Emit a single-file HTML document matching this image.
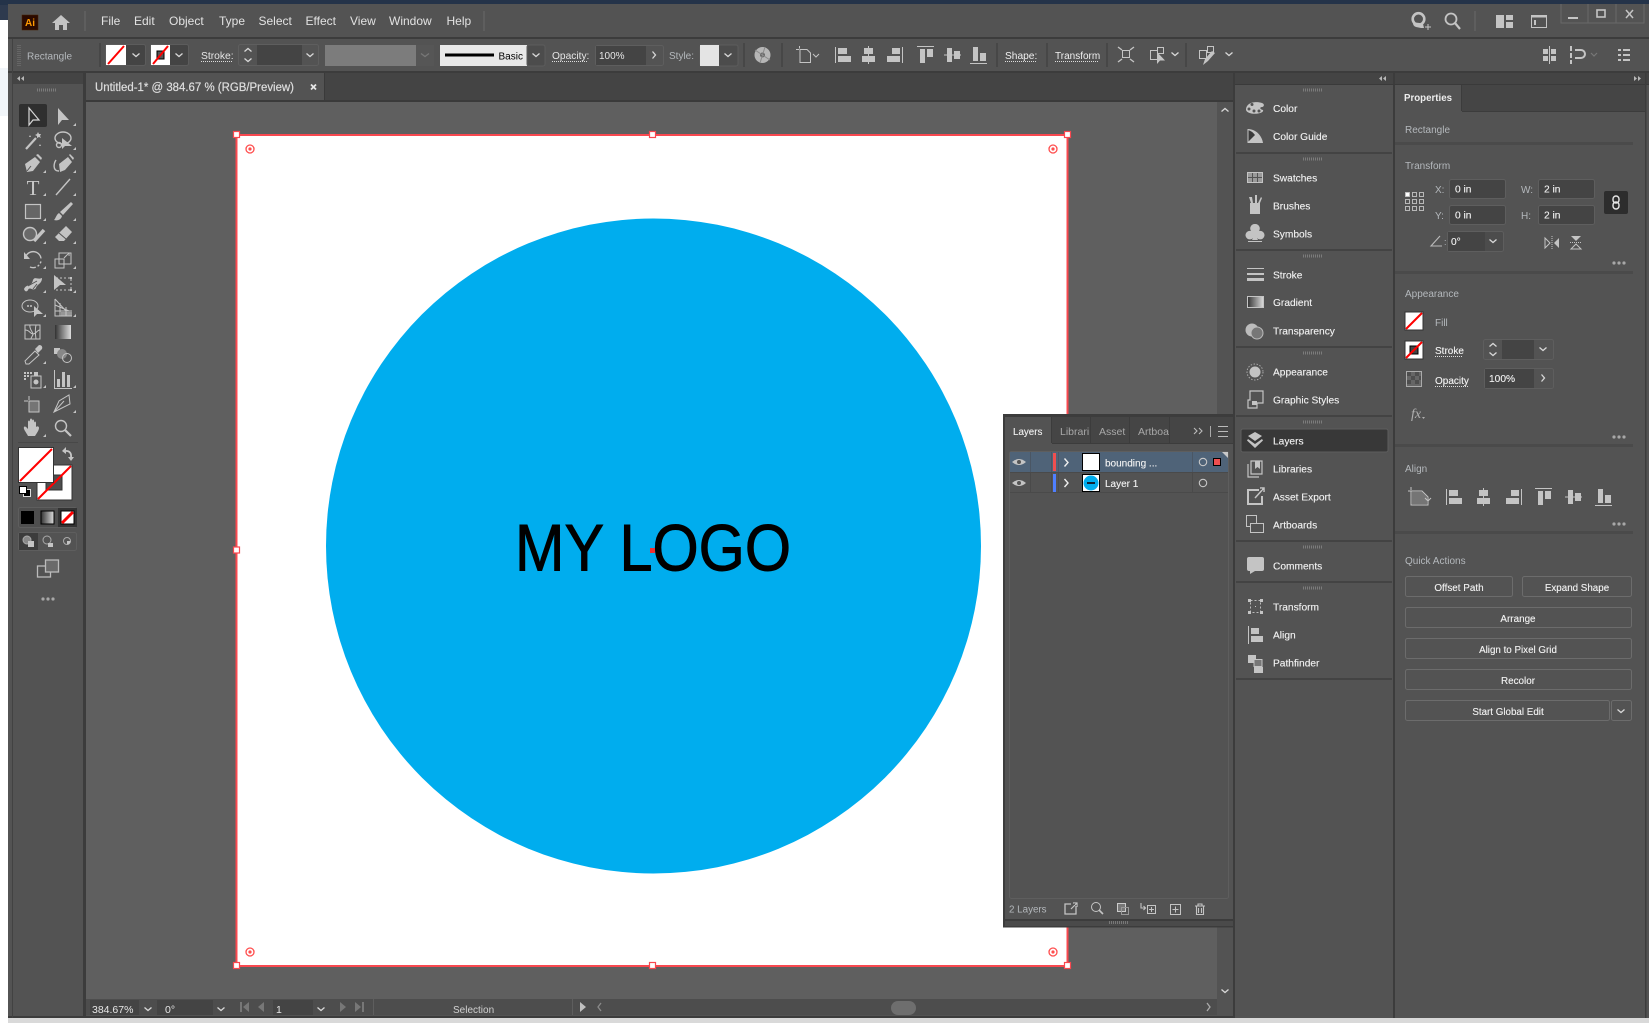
<!DOCTYPE html>
<html><head><meta charset="utf-8"><title>Illustrator</title>
<style>
html,body{margin:0;padding:0;background:#fff;overflow:hidden}
svg{display:block;position:absolute;left:0;top:0}
text{font-family:"Liberation Sans",sans-serif;font-size:10.5px;fill:#e6e6e6}
.m{font-size:12px;fill:#e2e2e2}
.h{fill:#b4b8bc;font-size:10px}
.d{fill:#f2f2f2;font-size:10.2px;stroke:#f2f2f2;stroke-width:.12}
.i{fill:#c4c4c4;stroke:none}
.s{fill:none;stroke:#c4c4c4;stroke-width:1.4}
.t{fill:none;stroke:#c4c4c4;stroke-width:1}
.inp{fill:#444;stroke:#5e5e5e}
.btn{fill:#535353;stroke:#6c6c6c}
.sep{stroke:#474747;stroke-width:2}
.ch{fill:none;stroke:#d8d8d8;stroke-width:1.3}
</style></head><body>
<svg width="1649" height="1023" viewBox="0 0 1649 1023" xmlns="http://www.w3.org/2000/svg">
<defs>
<path id="cd" class="ch" d="M-3.5-1.5L0 1.5L3.5-1.5"/>
<path id="cu" class="ch" d="M-3.5 1.5L0-1.5L3.5 1.5"/>
<path id="cr" class="ch" d="M-1.5-3.5L1.5 0L-1.5 3.5"/>
<path id="tri" fill="#c4c4c4" d="M0 0L3-3V0Z"/>
<g id="grip"><path stroke="#7c7c7c" stroke-width="1" stroke-dasharray="1 1" d="M-10 0H10M-10 1H10M-10 2H10"/></g>
<g id="dots"><circle cx="-5" r="1.6" fill="#a8a8a8"/><circle r="1.6" fill="#a8a8a8"/><circle cx="5" r="1.6" fill="#a8a8a8"/></g>
<g id="tg"><circle r="4" fill="none" stroke="#ff4d4d" stroke-width="1.3"/><circle r="1.6" fill="#ff4d4d"/></g>
<g id="al1"><path class="i" d="M0-8h1V8H0z"/><rect x="3" y="-7" width="9" height="6" class="i"/><rect x="3" y="1" width="13" height="6" class="i"/></g>
<g id="al2"><path class="i" d="M7-9h1V9H7z"/><rect x="3" y="-7" width="9" height="6" class="i"/><rect x="1" y="1" width="13" height="6" class="i"/></g>
<g id="al3"><path class="i" d="M15-8h1V8h-1z"/><rect x="5" y="-7" width="8" height="6" class="i"/><rect x="0" y="1" width="13" height="6" class="i"/></g>
<g id="al4"><path class="i" d="M0-9H17V-8H0z"/><rect x="3" y="-6" width="5" height="14" class="i"/><rect x="10" y="-6" width="6" height="8" class="i"/></g>
<g id="al5"><path class="i" d="M0-.5H17V.5H0z"/><rect x="3" y="-7" width="5" height="14" class="i"/><rect x="10" y="-4" width="6" height="8" class="i"/></g>
<g id="al6"><path class="i" d="M0 8H17V9H0z"/><rect x="3" y="-8" width="5" height="14" class="i"/><rect x="10" y="-2" width="6" height="8" class="i"/></g>
</defs>

<!-- backdrop -->
<rect width="1649" height="1023" fill="#fff"/>
<rect width="1649" height="5" fill="#243349"/>
<rect y="5" width="8" height="15" fill="#2e3a4e"/>
<rect y="20" width="8" height="48" fill="#fff"/>
<rect y="68" width="8" height="48" fill="#f1f5f9"/>
<rect y="116" width="8" height="907" fill="#fff"/>

<!-- window -->
<rect x="8" y="4" width="1641" height="1014" fill="#535353"/>
<rect x="8" y="1018" width="1641" height="5" fill="#d9d9d9"/>
<rect x="8" y="37" width="1641" height="2" fill="#3c3c3c"/>
<rect x="8" y="71" width="1641" height="2" fill="#3c3c3c"/>
<rect x="8" y="1016" width="1641" height="2" fill="#3c3c3c"/>
<rect x="12" y="39" width="1" height="979" fill="#424242"/>

<!-- title bar -->
<rect x="22" y="15" width="16" height="15" fill="#2b0a00" stroke="#4a2000" stroke-width=".5"/>
<text x="30" y="26" text-anchor="middle" style="font-size:10px;font-weight:bold;fill:#ff9a00">Ai</text>
<path class="i" d="M61 15L52 23H55V30H59V25H63V30H67V23H70Z"/>
<path stroke="#686868" d="M85 11V31M484 11V31"/>
<text class="m" x="101" y="25">File</text>
<text class="m" x="134" y="25">Edit</text>
<text class="m" x="169" y="25">Object</text>
<text class="m" x="219" y="25">Type</text>
<text class="m" x="258.500" y="25">Select</text>
<text class="m" x="305.500" y="25">Effect</text>
<text class="m" x="350" y="25">View</text>
<text class="m" x="389" y="25">Window</text>
<text class="m" x="446.500" y="25">Help</text>
<!-- top right icons -->
<circle cx="1418.500" cy="19" r="5.800" fill="none" stroke="#c4c4c4" stroke-width="2.600"/>
<path class="i" d="M1413 23q5-1 10 1l1 4h-3l-5-1q-3-1-3-4z"/>
<path stroke="#c4c4c4" stroke-width="1" d="M1428 24V30M1425 27H1431"/>
<circle cx="1451" cy="19" r="5.500" class="s" style="stroke-width:1.800"/><path stroke="#c4c4c4" stroke-width="2.200" d="M1455 23L1460 29"/>
<path stroke="#686868" d="M1475 11V31"/>
<path class="i" d="M1496 15H1504V28H1496ZM1506 15H1513V20H1506ZM1506 22H1513V28H1506Z"/>
<rect x="1531.500" y="15.500" width="15" height="12" fill="none" stroke="#c4c4c4"/><rect x="1531" y="15" width="16" height="2.500" class="i"/><rect x="1534" y="20" width="2" height="5" class="i"/>
<path fill="none" stroke="#686868" d="M1561 4V23H1644V4M1588 4V23M1616 4V23"/>
<rect x="1568" y="17" width="10" height="2" class="i"/>
<rect x="1597" y="10" width="8" height="7" fill="none" stroke="#c4c4c4" stroke-width="1.600"/>
<path stroke="#c4c4c4" stroke-width="1.500" d="M1626 10L1633 18M1633 10L1626 18"/>

<!-- control bar -->
<path stroke="#7a7a7a" stroke-width="1" stroke-dasharray="1 1" d="M18 45V66M20 45V66"/>
<text class="h" x="27" y="59.500">Rectangle</text>
<path class="sep" d="M100 43V67M744 43V67M782 43V67M997 43V67M1047 43V67M1107 43V67M1186 43V67" stroke-width="1"/>
<!-- fill -->
<rect x="105.500" y="44.500" width="40" height="21" rx="2" fill="#444" stroke="#5c5c5c"/>
<rect x="106" y="45" width="20" height="20" fill="#fff"/>
<path stroke="#f00" stroke-width="2" d="M108 64L124 46"/>
<use href="#cd" x="136" y="55"/>
<rect x="150.500" y="44.500" width="38" height="21" rx="2" fill="#444" stroke="#5c5c5c"/>
<rect x="151" y="45" width="19" height="20" fill="#fff"/><rect x="157" y="51" width="7" height="8" fill="#555" stroke="#000"/>
<path stroke="#f00" stroke-width="2" d="M153 64L168 46"/>
<use href="#cd" x="179" y="55"/>
<text x="201" y="59" style="font-size:10.300px">Stroke:</text><path stroke="#ddd" stroke-dasharray="1 1" d="M201 61.500H232"/>
<rect x="238.500" y="44.500" width="80" height="21" rx="2" fill="#535353" stroke="#5e5e5e"/>
<rect x="257" y="45" width="45" height="20" fill="#444"/>
<use href="#cu" x="248" y="50"/><use href="#cd" x="248" y="60"/><use href="#cd" x="310" y="55"/>
<rect x="325" y="45" width="91" height="21" fill="#7c7c7c"/>
<rect x="416" y="45" width="18" height="21" fill="#565656"/>
<path fill="none" stroke="#777" stroke-width="1.300" d="M421 53.500L425 56.500L429 53.500"/>
<rect x="440" y="45" width="87" height="21" fill="#e8e8e8"/>
<rect x="527" y="45" width="18" height="21" rx="2" fill="#4c4c4c" stroke="#5c5c5c"/>
<rect x="445" y="53.500" width="49" height="3" fill="#000"/>
<text x="498.500" y="59.500" style="fill:#000;font-size:10px">Basic</text>
<use href="#cd" x="536" y="55"/>
<text x="552" y="59" style="font-size:10.200px">Opacity:</text><path stroke="#ddd" stroke-dasharray="1 1" d="M552 61.500H588"/>
<rect x="595.500" y="45.500" width="68" height="20" rx="2" fill="#535353" stroke="#5e5e5e"/>
<rect x="596" y="46" width="50" height="19" fill="#444"/>
<text x="599" y="59" style="font-size:10px">100%</text>
<use href="#cr" x="654" y="55"/>
<text x="669" y="59" class="h">Style:</text>
<rect x="700" y="45" width="38" height="21" rx="2" fill="#4c4c4c" stroke="#5c5c5c"/>
<rect x="700" y="45" width="19" height="21" fill="#e4e4e4"/>
<use href="#cd" x="728" y="55"/>
<circle cx="762.500" cy="55" r="8" fill="#b6b6b6"/><circle cx="762.500" cy="55" r="2.500" fill="#666"/><path stroke="#8a8a8a" d="M755 50L770 60M765 47L760 63"/>
<path class="t" d="M800 49.500H807L810.500 53V62.500H800Z"/><path stroke="#c4c4c4" d="M796 49.500H799M799.500 46V48.500"/>
<path fill="none" stroke="#c4c4c4" d="M813 54L816 57L819 54"/>
<use href="#al1" x="835" y="55"/><use href="#al2" x="861" y="55"/><use href="#al3" x="887" y="55"/>
<use href="#al4" x="917" y="55"/><use href="#al5" x="944" y="55"/><use href="#al6" x="970" y="55"/>
<text x="1005" y="59" style="font-size:10.200px;fill:#f0f0f0">Shape:</text><path stroke="#ddd" stroke-dasharray="1 1" d="M1005 61.500H1036"/>
<text x="1055" y="59" style="font-size:10px;fill:#f0f0f0">Transform</text><path stroke="#ddd" stroke-dasharray="1 1" d="M1055 61.500H1099"/>
<rect x="1122.500" y="50.500" width="7" height="7" class="t"/>
<path stroke="#c4c4c4" stroke-width="1.400" d="M1118 47L1122 50M1134 47L1130 50M1118 62L1122 59M1134 62L1130 59"/>
<rect x="1157.500" y="47.500" width="6" height="6" class="t"/><rect x="1150.500" y="50.500" width="7" height="9" class="t"/>
<path class="i" d="M1157 52L1157 64L1160 60.500L1165 60.500Z"/>
<use href="#cd" x="1175" y="54"/>
<rect x="1199.500" y="50.500" width="7" height="8" class="t"/><rect x="1207.500" y="46.500" width="6" height="6" class="t"/>
<path class="i" d="M1203 65L1205 59L1212 51L1215 53L1208 61Z"/>
<use href="#cd" x="1229" y="54"/>
<path class="i" d="M1549 46h1v18h-1zM1543 49h5v5h-5zM1551 49h5v5h-5zM1543 56h5v5h-5zM1551 56h5v5h-5z"/>
<path class="i" d="M1570 46h2v5h-2zM1570 53h2v5h-2zM1570 60h2v4h-2zM1575 49h6a4 4 0 0 1 0 10h-6v-2h6a2 2 0 0 0 0-6h-6z"/>
<path fill="none" stroke="#777" stroke-width="1.200" d="M1591 53L1594 56L1597 53"/>
<path class="i" d="M1618 49h3v2h-3zM1623 49h7v2h-7zM1618 54h3v2h-3zM1623 54h7v2h-7zM1618 59h3v2h-3zM1623 59h7v2h-7z"/>

<!-- tab row -->
<rect x="13" y="73" width="72" height="11" fill="#444"/>
<rect x="85" y="73" width="1150" height="28" fill="#444"/>
<rect x="85" y="73" width="239" height="28" fill="#535353"/>
<rect x="324" y="73" width="1" height="28" fill="#3a3a3a"/>
<rect x="85" y="100" width="1150" height="2" fill="#3a3a3a"/>
<path d="M20 76L17 78.500L20 81ZM24 76L21 78.500L24 81Z" fill="#b8b8b8"/>
<text x="95" y="91" style="font-size:11.500px;stroke:#dedede;stroke-width:.2;fill:#dedede" textLength="199" lengthAdjust="spacingAndGlyphs">Untitled-1* @ 384.67 % (RGB/Preview)</text>
<path stroke="#e6e6e6" stroke-width="1.800" d="M311 84.500L316 89.500M316 84.500L311 89.500"/>

<!-- tools panel -->
<rect x="83" y="73" width="3" height="945" fill="#3c3c3c"/>
<use href="#grip" x="47" y="89"/>
<rect x="19" y="104" width="28" height="23" rx="2" fill="#2f2f2f"/>
<!-- 1 selection -->
<g transform="translate(33,117)"><path fill="none" stroke="#d6d6d6" stroke-width="1.200" d="M-4-9V8L0 3H6Z"/></g>
<g transform="translate(63,117)"><path class="i" d="M-5-9V8L-1 3H6Z"/></g><use href="#tri" x="73" y="126"/>
<!-- 2 wand/lasso -->
<g transform="translate(33,141)"><path stroke="#c4c4c4" stroke-width="2.200" d="M-7 8L3-3"/><path class="i" d="M5-9l1 2 2 0-1 2 1 2-2-1-2 1 0-2-2-1 2-1zM-3-6l1 2-2 0zM7 3l1 2-2 0z"/></g>
<g transform="translate(63,141)"><ellipse cx="0" cy="-3" rx="8" ry="6" class="s"/><circle cx="-4" cy="4" r="2.500" class="s"/><path class="i" d="M-1-3L-1 8L2 5H9Z"/></g><use href="#tri" x="73" y="150"/>
<!-- 3 pen -->
<g transform="translate(33,164)"><path class="i" d="M-6 8L-8 0L2-7L7-2L0 7Z"/><path class="i" d="M3-9L8-4L9-6L5-10Z"/><path stroke="#535353" d="M-6 7L-2 2"/></g><use href="#tri" x="43" y="173"/>
<g transform="translate(63,164)"><path class="s" d="M-4 7C-11 7-9-1-7-4"/><path class="i" d="M-3 8L-4 0L5-7L9-2L2 6Z"/><path class="i" d="M6-9L10-4L11-6L7-10Z"/></g><use href="#tri" x="73" y="173"/>
<!-- 4 type/line -->
<text x="33" y="195" text-anchor="middle" style="font-family:'Liberation Serif',serif;font-size:21px;fill:#c8c8c8">T</text><use href="#tri" x="43" y="196"/>
<path stroke="#c4c4c4" stroke-width="1.400" d="M56 195L70 179"/><use href="#tri" x="73" y="196"/>
<!-- 5 rect/brush -->
<rect x="25.500" y="204.500" width="15" height="14" fill="#666" stroke="#c4c4c4" stroke-width="1.200"/><use href="#tri" x="43" y="221"/>
<g transform="translate(63,212)"><path class="i" d="M8-10L10-8L0 3L-3 0Z"/><path class="i" d="M-4 1L-1 4C-2 8-6 9-9 8C-7 6-7 3-4 1Z"/></g><use href="#tri" x="73" y="221"/>
<!-- 6 blob / eraser -->
<g transform="translate(33,235)"><circle cx="-3" cy="-1" r="6.500" fill="#6a6a6a" stroke="#c4c4c4" stroke-width="1.400"/><path stroke="#c4c4c4" stroke-width="3.500" d="M1 6L11-5"/></g><use href="#tri" x="43" y="244"/>
<g transform="translate(63,235)"><path class="i" d="M3-9L9-3L1 6L-4 6L-8 2Z"/><path stroke="#535353" d="M-4-2L3 4"/></g><use href="#tri" x="73" y="244"/>
<!-- 7 rotate/scale -->
<g transform="translate(33,260)"><path class="s" d="M-7-4A8 8 0 1 1-3 7" stroke-dasharray="20 3 2 2 2 2"/><path class="i" d="M-9-8V-1H-3Z"/></g><use href="#tri" x="43" y="269"/>
<g transform="translate(63,260)"><rect x="-8" y="-1" width="9" height="9" class="t"/><rect x="-4" y="-7" width="12" height="11" class="t"/><path stroke="#c4c4c4" d="M1-2L6-7M3-7H6V-4"/></g><use href="#tri" x="73" y="269"/>
<!-- 8 warp / free transform -->
<g transform="translate(33,284)"><path class="i" d="M-9 5C-6-1-2 4 0-4C2-8 4-4 9-6C9 0 4 0 3 4C0 8-3 2-5 6C-6 8-8 8-9 5Z"/><path stroke="#535353" d="M-5 2L4-3M0 5L4 0"/></g><use href="#tri" x="43" y="293"/>
<g transform="translate(63,284)"><rect x="-7" y="-6" width="15" height="12" fill="none" stroke="#c4c4c4" stroke-dasharray="2 2"/><path class="i" d="M-9-9L-9 6L-3 1H3Z"/><rect x="7" y="-7" width="2" height="2" class="i"/><rect x="7" y="5" width="2" height="2" class="i"/></g><use href="#tri" x="73" y="293"/>
<!-- 9 shape builder / perspective -->
<g transform="translate(33,308)"><ellipse cx="-3" cy="-2" rx="8" ry="6" class="t"/><circle cx="-5" cy="-2" r="1" class="i"/><circle cx="-2" cy="-2" r="1" class="i"/><path class="i" d="M1-2V9L4 6H10Z"/></g><use href="#tri" x="43" y="317"/>
<g transform="translate(63,308)"><path class="t" d="M-8-9V8H9M-8-9L3 3M-8-3L6 3M-8 3H9M-3-5V8M3-1V8"/><path class="i" d="M-2 4H9V8H-2Z" opacity=".6"/></g><use href="#tri" x="73" y="317"/>
<!-- 10 mesh / gradient -->
<g transform="translate(33,332)"><rect x="-8" y="-7" width="15" height="14" class="t"/><path class="t" d="M-8-2C-3-2-3 2 0 2S4-2 7-2M-3-7C-4-3 0 0 0 2S-2 5-2 7M3-7C2-3 2 0 3 7"/></g>
<defs><linearGradient id="g1"><stop offset="0" stop-color="#333"/><stop offset="1" stop-color="#ddd"/></linearGradient></defs>
<rect x="55" y="325" width="16" height="14" fill="url(#g1)"/>
<!-- 11 eyedropper / blend -->
<g transform="translate(33,355)"><path class="t" d="M-7 9L-8 6L2-4L6 0L-4 9Z"/><path class="i" d="M2-6L6-10Q10-10 9-6L5-2Z"/></g><use href="#tri" x="43" y="364"/>
<g transform="translate(63,355)"><rect x="-9" y="-7" width="6" height="6" class="i"/><circle cx="-1" cy="-1" r="5" fill="#888"/><circle cx="4" cy="3" r="4.500" class="t"/></g>
<!-- 12 symbol sprayer / graph -->
<g transform="translate(33,379)"><rect x="-2" y="-3" width="10" height="12" class="t"/><rect x="1" y="-7" width="4" height="4" class="i"/><circle cx="3" cy="3" r="2.500" class="i"/><path class="i" d="M-9-7h2v2h-2zM-6-7h2v2h-2zM-3-7h2v2h-2zM-9-4h2v2h-2zM-6-4h2v2h-2zM-9-1h2v2h-2z"/></g><use href="#tri" x="43" y="388"/>
<g transform="translate(63,379)"><path class="i" d="M-9-9h1V9H9V10H-9zM-6 0h3V8h-3zM-1-7h3V8h-3zM4-4h3V8H4z"/></g><use href="#tri" x="73" y="388"/>
<!-- 13 artboard / slice -->
<g transform="translate(33,404)"><path class="t" d="M-4-3H6V8H-4Z"/><path class="i" d="M-4-3H6V8H-4Z" opacity=".3"/><path stroke="#c4c4c4" d="M-9-3H-5M-4-8V-4"/></g>
<g transform="translate(63,404)"><path class="t" d="M-9 8L-4-3L6-9L7 0Z M-9 8L1-3"/></g><use href="#tri" x="73" y="413"/>
<!-- 14 hand / zoom -->
<g transform="translate(33,428)"><path class="i" d="M-5 8C-7 4-10 1-9-1S-5 1-5 1V-6C-5-8-3-8-3-6V-2-8C-3-10-1-10-1-8V-2-7C-1-9 1-9 1-7V-2-5C1-7 3-7 3-5V-1C4-2 6-2 6 0S4 5 2 8Z"/></g><use href="#tri" x="43" y="437"/>
<g transform="translate(63,428)"><circle cx="-2" cy="-2" r="5.500" class="s"/><path stroke="#c4c4c4" stroke-width="2.200" d="M2 2L8 8"/></g>
<path stroke="#484848" d="M18 442.500H78"/>
<!-- fill/stroke -->
<rect x="37" y="465" width="35" height="35" fill="#fff" stroke="#333"/>
<rect x="46" y="475" width="16" height="15" fill="#4e4e4e" stroke="#333"/>
<path stroke="#f00" stroke-width="2" d="M38 499L71 466"/>
<rect x="18.500" y="447.500" width="35" height="35" fill="#fff" stroke="#333"/>
<path stroke="#f00" stroke-width="2" d="M20 481L52 449"/>
<path fill="none" stroke="#c8c8c8" stroke-width="1.800" d="M64 451Q72 450 71 458"/>
<path class="i" d="M62 451L66 447V454ZM68 457H74L71 461Z"/>
<rect x="23.500" y="489.500" width="7" height="7" fill="#000" stroke="#ddd"/>
<rect x="19.500" y="486.500" width="7" height="7" fill="#fff" stroke="#000"/>
<!-- color row -->
<rect x="18.500" y="507.500" width="58" height="20" rx="2" fill="#4e4e4e" stroke="#5e5e5e"/>
<rect x="58" y="508" width="19" height="19" fill="#333"/>
<rect x="21" y="511" width="13" height="13" fill="#000"/>
<rect x="41" y="511" width="13" height="13" fill="url(#g1)" stroke="#000"/>
<rect x="61" y="511" width="13" height="13" fill="#fff" stroke="#000"/>
<path stroke="#f00" stroke-width="3" d="M62 523L73 512"/>
<!-- draw modes -->
<rect x="18.500" y="532.500" width="58" height="18" rx="2" fill="#535353" stroke="#5e5e5e"/>
<rect x="19" y="533" width="19" height="17" fill="#3c3c3c"/>
<circle cx="27" cy="540" r="4" fill="#888" stroke="#aaa"/><rect x="28" y="541" width="6" height="6" class="i"/>
<circle cx="47" cy="540" r="4" fill="none" stroke="#aaa"/><rect x="48" y="543" width="5" height="4" class="i"/>
<circle cx="67" cy="541" r="3.500" fill="none" stroke="#aaa"/><path class="i" d="M67 541h3.500a3.500 3.500 0 0 1-3.500 3.500z"/>
<!-- screen mode -->
<rect x="37.500" y="566" width="13" height="11" fill="none" stroke="#bbb" stroke-width="1.300"/>
<rect x="45.500" y="560" width="13" height="12" fill="#6a6a6a" stroke="#bbb" stroke-width="1.300"/>
<use href="#dots" x="48" y="599"/>

<!-- canvas -->
<rect x="86" y="102" width="1131" height="897" fill="#5f5f5f"/>
<rect x="1217" y="102" width="16" height="897" fill="#535353"/>
<use href="#cu" x="1225" y="110"/>
<use href="#cd" x="1225" y="991"/>

<!-- artboard -->
<rect x="236.500" y="135" width="831" height="831" fill="#fff"/>
<circle cx="653.500" cy="546" r="327.500" fill="#00adee"/>
<text x="515" y="570.500" textLength="276" lengthAdjust="spacingAndGlyphs" style="font-size:66px;fill:#000;stroke:#000;stroke-width:.9">MY LOGO</text>
<rect x="236.500" y="135" width="831" height="831" fill="none" stroke="#f8484f" stroke-width="2"/>
<g fill="#fff" stroke="#f8484f" stroke-width="1.200">
<rect x="233.500" y="131.500" width="6" height="6"/><rect x="649.500" y="131.500" width="6" height="6"/><rect x="1064.500" y="131.500" width="6" height="6"/>
<rect x="233.500" y="547" width="6" height="6"/>
<rect x="233.500" y="962.500" width="6" height="6"/><rect x="649.500" y="962.500" width="6" height="6"/><rect x="1064.500" y="962.500" width="6" height="6"/>
</g>
<rect x="650" y="548" width="5" height="5" fill="#f03030"/>
<use href="#tg" x="250" y="149"/><use href="#tg" x="1053" y="149"/><use href="#tg" x="250" y="952"/><use href="#tg" x="1053" y="952"/>

<!-- status bar -->
<rect x="86" y="999" width="1131" height="16" fill="#4d4d4d"/>
<rect x="90" y="1000" width="49" height="15" fill="#444"/>
<text x="92" y="1013" style="font-size:10.500px">384.67%</text>
<use href="#cd" x="148" y="1009"/>
<rect x="157" y="1000" width="56" height="15" fill="#444"/>
<text x="165" y="1013" style="font-size:10.500px">0°</text>
<use href="#cd" x="221" y="1009"/>
<path fill="#777" d="M240 1002h2v10h-2zM249 1002V1012L243 1007ZM264 1002V1012L258 1007Z"/>
<rect x="273" y="1000" width="40" height="15" fill="#444"/>
<text x="276" y="1013" style="font-size:10.500px">1</text>
<use href="#cd" x="321" y="1009"/>
<path fill="#777" d="M340 1002V1012L346 1007ZM355 1002V1012L361 1007ZM362 1002h2v10h-2z"/>
<path stroke="#5e5e5e" d="M373.500 999V1015M572.500 999V1015"/>
<text x="453" y="1013" style="fill:#d0d0d0;font-size:10px">Selection</text>
<path fill="#c0c0c0" d="M580 1002V1012L586 1007Z"/>
<path fill="none" stroke="#8a8a8a" stroke-width="1.300" d="M601 1003L598 1007L601 1011"/>
<rect x="891" y="1001" width="25" height="14" rx="7" fill="#6e6e6e"/>
<path fill="none" stroke="#aaa" stroke-width="1.300" d="M1207 1003L1210 1007L1207 1011"/>

<!-- dock column -->
<rect x="1233" y="73" width="2" height="945" fill="#3c3c3c"/>
<rect x="1235" y="73" width="414" height="11" fill="#444"/>
<rect x="1235" y="84" width="158" height="934" fill="#535353"/>
<rect x="1393" y="73" width="2" height="945" fill="#3c3c3c"/>
<rect x="1235" y="84" width="414" height="1" fill="#3a3a3a"/>
<path d="M1382 76L1379 78.500L1382 81ZM1386 76L1383 78.500L1386 81ZM1634 76L1637 78.500L1634 81ZM1638 76L1641 78.500L1638 81Z" fill="#b8b8b8"/>
<g stroke="#3e3e3e" stroke-width="1.500">
<path d="M1236 153H1392M1236 250H1392M1236 347H1392M1236 416H1392M1236 541H1392M1236 582H1392M1236 679H1392"/>
</g>
<g><use href="#grip" x="1313" y="89"/><use href="#grip" x="1313" y="158"/><use href="#grip" x="1313" y="255"/><use href="#grip" x="1313" y="352"/><use href="#grip" x="1313" y="421"/><use href="#grip" x="1313" y="546"/><use href="#grip" x="1313" y="587"/></g>
<rect x="1241" y="429" width="147" height="23" rx="2" fill="#383838" stroke="#5e5e5e"/>
<text class="d" x="1273" y="112">Color</text>
<text class="d" x="1273" y="140">Color Guide</text>
<text class="d" x="1273" y="181.500">Swatches</text>
<text class="d" x="1273" y="209.500">Brushes</text>
<text class="d" x="1273" y="237.500">Symbols</text>
<text class="d" x="1273" y="278.500">Stroke</text>
<text class="d" x="1273" y="306">Gradient</text>
<text class="d" x="1273" y="334.500">Transparency</text>
<text class="d" x="1273" y="375.500">Appearance</text>
<text class="d" x="1273" y="403.500">Graphic Styles</text>
<text class="d" x="1273" y="444.500">Layers</text>
<text class="d" x="1273" y="472.500">Libraries</text>
<text class="d" x="1273" y="500.500">Asset Export</text>
<text class="d" x="1273" y="528.500">Artboards</text>
<text class="d" x="1273" y="569.500">Comments</text>
<text class="d" x="1273" y="610.500">Transform</text>
<text class="d" x="1273" y="638.500">Align</text>
<text class="d" x="1273" y="666.500">Pathfinder</text>
<!-- dock icons -->
<path class="i" d="M1246 110C1246 102 1256 101 1262 103C1265 104 1264 107 1262 107C1260 107 1259 109 1263 110C1265 114 1248 116 1246 110Z"/>
<g fill="#535353"><circle cx="1252" cy="104.500" r="1.500"/><circle cx="1249" cy="109" r="1.500"/><circle cx="1254" cy="111" r="1.500"/><circle cx="1259" cy="111" r="1.500"/></g>
<path class="i" d="M1248 129C1256 129 1262 136 1263 143H1248Z"/><path fill="#3a3a3a" d="M1248 130V142L1255 135Q1252 131 1248 130Z"/><path fill="none" stroke="#c4c4c4" d="M1248 129V143"/>
<path fill="none" stroke="#c4c4c4" d="M1247.500 172.500H1262.500V182.500H1247.500Z"/><path fill="#9a9a9a" d="M1248 173H1262V182H1248Z"/><path stroke="#535353" d="M1252.500 173V182M1257.500 173V182M1248 177.500H1262"/>
<path class="i" d="M1250 203H1260V214H1250ZM1249 197L1252 197L1253 203H1251ZM1255 195H1257V203H1255ZM1262 198L1260 203H1258L1261 197Z"/>
<path class="i" d="M1255 224A4.500 4.500 0 0 1 1259 231A4.300 4.300 0 1 1 1257 238L1258 240H1252L1253 238A4.300 4.300 0 1 1 1251 231A4.500 4.500 0 0 1 1255 224ZM1248 241H1262V242H1248Z"/>
<path class="i" d="M1247 268H1264V269H1247ZM1247 273H1264V275H1247ZM1247 278H1264V281H1247Z"/>
<rect x="1247.500" y="296.500" width="16" height="11" fill="url(#g1)" stroke="#c4c4c4"/>
<circle cx="1252" cy="330" r="6.500" fill="#bcbcbc"/><circle cx="1257" cy="333" r="6" fill="#777" stroke="#bbb"/>
<circle cx="1255" cy="372" r="5.500" class="i"/><circle cx="1255" cy="372" r="8" fill="none" stroke="#aaa" stroke-dasharray="1.500 1.500"/>
<path fill="none" stroke="#c4c4c4" stroke-width="1.200" d="M1250 391H1263V403H1257V408H1248V400H1250Z"/><rect x="1252" y="401" width="5" height="4" class="i"/>
<path class="i" d="M1255 432L1262 436L1255 441L1248 436ZM1248 439L1255 444L1262 439L1263 440.500L1255 448L1247 440.500Z" />
<path fill="none" stroke="#c4c4c4" stroke-width="1.200" d="M1251 461H1262V474H1251ZM1248 464V477H1259"/><path class="i" d="M1255 461H1260V469L1257.500 467L1255 469Z"/>
<path fill="none" stroke="#c4c4c4" stroke-width="2" d="M1259 490H1248V504H1262V496"/><path stroke="#c4c4c4" stroke-width="1.500" d="M1255 498L1264 488M1260 488H1264V492"/>
<rect x="1246.500" y="515.500" width="10" height="11" fill="none" stroke="#c4c4c4"/><rect x="1250.500" y="523.500" width="13" height="9" fill="#535353" stroke="#c4c4c4"/>
<path class="i" d="M1249 557H1262Q1264 557 1264 559V569Q1264 571 1262 571H1255L1250 574V571H1249Q1247 571 1247 569V559Q1247 557 1249 557Z"/>
<rect x="1250.500" y="600.500" width="10" height="12" fill="none" stroke="#bbb" stroke-dasharray="2 2"/><path class="i" d="M1248 599h3v3h-3zM1260 599h3v3h-3zM1248 611h3v3h-3zM1260 611h3v3h-3zM1255 606h1v1h-1z"/>
<path class="i" d="M1248 626h1v18h-1zM1251 628h8v6h-8zM1251 636h12v6h-12z"/>
<path class="i" d="M1248 655h8v8h-8z"/><rect x="1254" y="659.500" width="8" height="7" fill="#777" stroke="#c4c4c4"/><path class="i" d="M1254 667h9v6h-9z"/>

<!-- layers panel -->
<rect x="1003" y="414" width="232" height="513" fill="#535353"/>
<rect x="1003" y="414" width="232" height="3" fill="#3c3c3c"/>
<rect x="1003" y="414" width="2" height="513" fill="#3c3c3c"/>
<rect x="1233" y="414" width="2" height="513" fill="#3c3c3c"/>
<rect x="1005" y="417" width="228" height="26" fill="#454545"/>
<text x="1060" y="435" style="fill:#a8a8a8">Librari</text>
<text x="1099" y="435" style="fill:#a8a8a8">Asset E</text>
<rect x="1129" y="420" width="9" height="20" fill="#454545"/>
<text x="1138" y="435" style="fill:#a8a8a8">Artboa</text>
<rect x="1169" y="420" width="22" height="20" fill="#454545"/>
<rect x="1005" y="417" width="47" height="27" fill="#535353"/>
<path stroke="#3c3c3c" d="M1051.500 417V443M1090.500 417V443M1129.500 417V443M1169.500 417V443"/>
<path stroke="#3c3c3c" d="M1052 443.500H1233"/>
<text x="1013" y="435" style="font-size:9.800px;fill:#f0f0f0;stroke:#f0f0f0;stroke-width:.1">Layers</text>
<path fill="none" stroke="#bbb" stroke-width="1.100" d="M1194 428L1197 431L1194 434M1199 428L1202 431L1199 434"/>
<path stroke="#aaa" d="M1210.500 426V437"/>
<path stroke="#bbb" d="M1218 426.500H1228M1218 431.500H1228M1218 436.500H1228"/>
<!-- list -->
<rect x="1009.500" y="451.500" width="219" height="447" rx="2" fill="#535353" stroke="#5e5e5e"/>
<rect x="1010" y="452" width="218" height="20" fill="#4f6378"/>
<path stroke="#4a4a4a" d="M1010 472.500H1228M1010 492.500H1228"/>
<path stroke="#4a5664" d="M1030.500 452V472M1051.500 452V472M1058.500 452V472M1192.500 452V472"/>
<path stroke="#4a4a4a" d="M1030.500 473V492M1051.500 473V492M1058.500 473V492M1192.500 473V492"/>
<path class="i" d="M1012 462Q1019 456 1026 462Q1019 468 1012 462Z"/><circle cx="1019" cy="462" r="2" fill="#555"/>
<path class="i" d="M1012 483Q1019 477 1026 483Q1019 489 1012 483Z"/><circle cx="1019" cy="483" r="2" fill="#555"/>
<rect x="1053" y="453" width="3" height="18" fill="#ef4f4f"/>
<rect x="1053" y="474" width="3" height="18" fill="#4f7fff"/>
<path fill="none" stroke="#eee" stroke-width="1.400" d="M1064.500 458.500L1068 462.500L1064.500 466.500M1064.500 479L1068 483L1064.500 487"/>
<rect x="1082.500" y="453.500" width="17" height="17" fill="#fff" stroke="#000"/>
<rect x="1082.500" y="474.500" width="17" height="17" fill="#fff" stroke="#000"/>
<circle cx="1091" cy="483" r="7.500" fill="#00adee"/><rect x="1087" y="482" width="8" height="2" fill="#123"/>
<text x="1105" y="466.500" class="d" style="font-size:10px">bounding ...</text>
<text x="1105" y="487" class="d" style="font-size:10px">Layer 1</text>
<circle cx="1203" cy="462" r="3.700" fill="none" stroke="#c8c8c8" stroke-width="1.100"/>
<circle cx="1203" cy="483" r="3.700" fill="none" stroke="#c8c8c8" stroke-width="1.100"/>
<rect x="1213.500" y="458.500" width="7" height="7" fill="#ef4f4f" stroke="#000"/>
<path fill="#c8c8c8" d="M1222 452H1228V458Z"/>
<!-- footer -->
<text x="1009" y="912.500" class="h" style="font-size:9.800px">2 Layers</text>
<path fill="none" stroke="#c4c4c4" stroke-width="1.300" d="M1076 905V914H1065V904H1071"/><path stroke="#c4c4c4" stroke-width="1.200" d="M1071 909L1077 903M1073 903H1077V907"/>
<circle cx="1096" cy="907" r="4.500" class="t"/><path stroke="#c4c4c4" stroke-width="1.600" d="M1099 910L1103 914"/>
<rect x="1117.500" y="903.500" width="8" height="8" fill="#777" stroke="#ccc"/><rect x="1121.500" y="907.500" width="7" height="7" fill="none" stroke="#999"/>
<path fill="none" stroke="#c4c4c4" stroke-width="1.100" d="M1141 903V908H1145M1143.500 906L1145.500 908L1143.500 910"/><rect x="1147.500" y="905.500" width="8" height="8" fill="none" stroke="#c4c4c4"/><path stroke="#c4c4c4" d="M1149 909.500H1154M1151.500 907V912"/>
<rect x="1170.500" y="904.500" width="10" height="10" fill="none" stroke="#c4c4c4"/><path stroke="#c4c4c4" d="M1172.500 909.500H1178.500M1175.500 906.500V912.500"/>
<path fill="none" stroke="#c4c4c4" stroke-width="1.100" d="M1195 906H1205M1198 906V904H1202V906M1196.500 906V914.500H1203.500V906M1198.500 908V913M1201.500 908V913"/>
<rect x="1005" y="919" width="228" height="2" fill="#3c3c3c"/>
<rect x="1005" y="921" width="228" height="6" fill="#4a4a4a"/>
<path stroke="#777" stroke-width="3" stroke-dasharray="1 1" d="M1109 922.500H1128"/>
<rect x="1003" y="926" width="232" height="1.500" fill="#3c3c3c"/>

<!-- properties -->
<rect x="1395" y="85" width="254" height="933" fill="#535353"/>
<rect x="1395" y="85" width="251" height="26" fill="#454545"/>
<rect x="1395" y="85" width="67" height="27" fill="#535353"/>
<path stroke="#3c3c3c" d="M1461.500 85V111M1462 111.500H1645"/>
<rect x="1645" y="73" width="1.500" height="945" fill="#3c3c3c"/>
<text x="1404" y="101" textLength="48" lengthAdjust="spacingAndGlyphs" style="font-size:10.500px;font-weight:bold;fill:#ededed">Properties</text>
<text x="1405" y="133" class="h">Rectangle</text>
<g fill="#4a4a4a"><rect x="1395" y="142" width="238" height="3"/><rect x="1395" y="271" width="238" height="3"/><rect x="1395" y="444" width="238" height="3"/><rect x="1395" y="531" width="238" height="3"/></g>
<text x="1405" y="169" class="h">Transform</text>
<g fill="none" stroke="#c4c4c4" stroke-width=".9"><rect x="1405.500" y="192.500" width="4" height="4" fill="#fff"/><rect x="1412.500" y="192.500" width="4" height="4"/><rect x="1419.500" y="192.500" width="4" height="4"/><rect x="1405.500" y="199.500" width="4" height="4"/><rect x="1412.500" y="199.500" width="4" height="4"/><rect x="1419.500" y="199.500" width="4" height="4"/><rect x="1405.500" y="206.500" width="4" height="4"/><rect x="1412.500" y="206.500" width="4" height="4"/><rect x="1419.500" y="206.500" width="4" height="4"/></g>
<text x="1435" y="193" class="h">X:</text>
<text x="1435" y="219" class="h">Y:</text>
<text x="1521" y="193" class="h">W:</text>
<text x="1521" y="219" class="h">H:</text>
<rect x="1449.500" y="179.500" width="56" height="19" rx="2" class="inp"/>
<rect x="1538.500" y="179.500" width="56" height="19" rx="2" class="inp"/>
<rect x="1449.500" y="205.500" width="56" height="19" rx="2" class="inp"/>
<rect x="1538.500" y="205.500" width="56" height="19" rx="2" class="inp"/>
<text x="1455" y="192.500" class="d">0 in</text>
<text x="1544" y="192.500" class="d">2 in</text>
<text x="1455" y="218.500" class="d">0 in</text>
<text x="1544" y="218.500" class="d">2 in</text>
<rect x="1604" y="191" width="24" height="23" rx="2" fill="#2d2d2d"/>
<rect x="1613" y="196" width="6" height="7" rx="3" fill="none" stroke="#e8e8e8" stroke-width="1.400"/>
<rect x="1613" y="202" width="6" height="7" rx="3" fill="none" stroke="#e8e8e8" stroke-width="1.400"/>
<path fill="none" stroke="#bbb" stroke-width="1.100" d="M1442 246H1431L1440 236"/>
<text x="1444" y="245" class="h" style="font-size:9px">:</text>
<rect x="1447.500" y="231.500" width="56" height="20" rx="2" fill="#4c4c4c" stroke="#5e5e5e"/>
<rect x="1448" y="232" width="37" height="19" fill="#444"/>
<text x="1451" y="245" class="d">0°</text>
<use href="#cd" x="1493" y="241"/>
<path class="i" d="M1559 238L1554 243L1559 248Z"/><path fill="none" stroke="#c4c4c4" d="M1545 238V248L1550 243Z"/><path stroke="#c4c4c4" stroke-dasharray="1 1" d="M1552 236V250"/>
<path class="i" d="M1571 236H1581L1576 241Z"/><path fill="none" stroke="#c4c4c4" d="M1571 249H1581L1576 244Z"/><path stroke="#c4c4c4" stroke-dasharray="1 1" d="M1570 242.500H1582"/>
<use href="#dots" x="1619" y="263"/>

<text x="1405" y="297" class="h">Appearance</text>
<rect x="1405" y="312" width="18" height="18" fill="#fff" stroke="#333"/><path stroke="#f00" stroke-width="2" d="M1406 329L1422 313"/>
<text x="1435" y="326" class="h">Fill</text>
<rect x="1405" y="341" width="18" height="18" fill="#fff" stroke="#333"/><rect x="1410" y="346" width="8" height="8" fill="#444" stroke="#000"/><path stroke="#f00" stroke-width="2" d="M1406 358L1422 342"/>
<text x="1435" y="354" class="d" style="font-size:10px">Stroke</text><path stroke="#ddd" stroke-dasharray="1 1" d="M1435 356.500H1462"/>
<rect x="1483.500" y="339.500" width="70" height="20" rx="2" fill="#535353" stroke="#5e5e5e"/>
<rect x="1502" y="340" width="32" height="19" fill="#444"/>
<use href="#cu" x="1493" y="345"/><use href="#cd" x="1493" y="354"/><use href="#cd" x="1543" y="349"/>
<rect x="1406.500" y="371.500" width="15" height="15" fill="#666" stroke="#aaa"/>
<path fill="#4e4e4e" d="M1407 372h4v4h-4zM1415 372h4v4h-4zM1411 376h4v4h-4zM1419 376h2v4h-2zM1407 380h4v4h-4zM1415 380h4v4h-4z"/>
<text x="1435" y="384" class="d" style="font-size:10px">Opacity</text><path stroke="#ddd" stroke-dasharray="1 1" d="M1435 386.500H1468"/>
<rect x="1484.500" y="368.500" width="69" height="20" rx="2" fill="#535353" stroke="#5e5e5e"/>
<rect x="1485" y="369" width="49" height="19" fill="#444"/>
<text x="1489" y="382" class="d">100%</text>
<use href="#cr" x="1543" y="378"/>
<text x="1411" y="418" style="font-family:'Liberation Serif',serif;font-style:italic;font-size:14px;fill:#b0b0b0">fx</text>
<path fill="#b0b0b0" d="M1422 417h3l-1.500 2z"/>
<use href="#dots" x="1619" y="437"/>

<text x="1405" y="472" class="h">Align</text>
<path class="t" d="M1411 491H1422L1428 497V505H1411Z"/><path class="i" d="M1412 492H1422L1427 497V504H1412Z" opacity=".3"/>
<path stroke="#c4c4c4" d="M1408 491H1411M1411 487V490"/>
<path fill="none" stroke="#c4c4c4" d="M1425 498L1428 501L1431 498"/>
<use href="#al1" x="1446" y="497"/><use href="#al2" x="1476" y="497"/><use href="#al3" x="1506" y="497"/>
<use href="#al4" x="1535" y="497"/><use href="#al5" x="1565" y="497"/><use href="#al6" x="1595" y="497"/>
<use href="#dots" x="1619" y="524"/>

<text x="1405" y="564" class="h">Quick Actions</text>
<rect x="1405.500" y="576.500" width="107" height="20" rx="2" class="btn"/>
<rect x="1522.500" y="576.500" width="109" height="20" rx="2" class="btn"/>
<rect x="1405.500" y="607.500" width="226" height="20" rx="2" class="btn"/>
<rect x="1405.500" y="638.500" width="226" height="20" rx="2" class="btn"/>
<rect x="1405.500" y="669.500" width="226" height="20" rx="2" class="btn"/>
<rect x="1405.500" y="700.500" width="204" height="20" rx="2" class="btn"/>
<rect x="1611.500" y="700.500" width="20" height="20" rx="2" class="btn"/>
<text class="d" x="1459" y="591" text-anchor="middle" style="font-size:9.900px">Offset Path</text>
<text class="d" x="1577" y="591" text-anchor="middle" style="font-size:9.800px">Expand Shape</text>
<text class="d" x="1518" y="622" text-anchor="middle" style="font-size:9.900px">Arrange</text>
<text class="d" x="1518" y="653" text-anchor="middle" style="font-size:9.800px">Align to Pixel Grid</text>
<text class="d" x="1518" y="684" text-anchor="middle" style="font-size:9.900px">Recolor</text>
<text class="d" x="1508" y="715" text-anchor="middle" style="font-size:9.800px">Start Global Edit</text>
<use href="#cd" x="1621" y="711"/>
</svg>
</body></html>
